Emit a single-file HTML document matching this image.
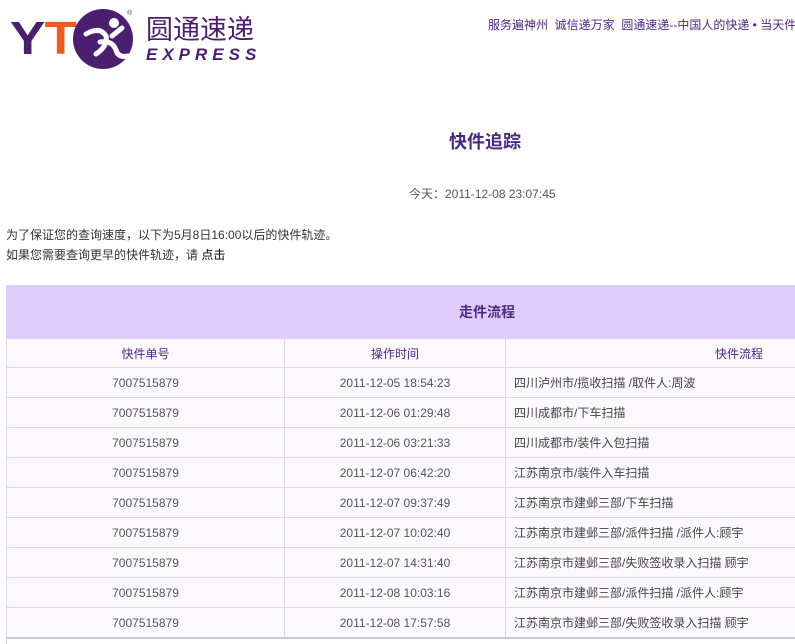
<!DOCTYPE html>
<html><head><meta charset="utf-8"><style>
body{margin:0;width:795px;height:644px;overflow:hidden;background:#fff;font-family:"Liberation Sans","Noto Sans CJK SC",sans-serif;font-size:12px;color:#333;position:relative}
.abs{position:absolute;white-space:nowrap}
table{position:absolute;left:6px;top:285px;border-collapse:collapse;width:800px;table-layout:fixed}
td{border:1px solid #e3d3f3;height:29px;text-align:center;color:#555;font-size:12px;background:#fbf8fe;padding:0}
td.l{text-align:left;padding-left:8px;color:#444}
tr.h td{background:#e0ccfb;height:52px;font-weight:bold;color:#4a2a80;font-size:14px;border-color:#e0ccfb}
tr.c td{color:#4a2a80;height:28px}
</style></head><body>
<svg class="abs" style="left:10px;top:6px" width="250" height="66" viewBox="0 0 250 66">
<text x="0" y="48" font-family="Liberation Sans" font-weight="bold" font-size="46" fill="#4b1f6f" transform="scale(1.15,1)" letter-spacing="-5">Y</text>
<text x="30" y="48" font-family="Liberation Sans" font-weight="bold" font-size="46" fill="#f05a22" transform="scale(1.15,1)">T</text>
<circle cx="93" cy="33" r="30" fill="#4b1f6f"/>
<circle cx="104" cy="17" r="5" fill="#fff"/>
<path d="M76 28 Q90 20 96 30 Q98 40 86 48 M90 36 Q102 34 106 44 Q108 52 118 50 M102 30 L112 22" stroke="#fff" stroke-width="5" fill="none" stroke-linecap="round"/>
<text x="117" y="9" font-size="7" fill="#4b1f6f">®</text>
<text x="136" y="33" font-family="Noto Sans CJK SC" font-size="27" fill="#4b1f6f" letter-spacing="0">圆通速递</text>
<text x="136" y="54" font-family="Liberation Sans" font-weight="bold" font-style="italic" font-size="17" fill="#4b1f6f" letter-spacing="5">EXPRESS</text>
</svg>
<div class="abs" style="left:488px;top:16px;color:#4a2a80;font-size:12px">服务遍神州&nbsp; 诚信递万家&nbsp; 圆通速递--中国人的快递 • 当天件</div>
<div class="abs" style="left:449px;top:128px;color:#4a2a80;font-size:18px;font-weight:bold">快件追踪</div>
<div class="abs" style="left:409px;top:185px;color:#555">今天：2011-12-08 23:07:45</div>
<div class="abs" style="left:6px;top:226px;color:#333">为了保证您的查询速度，以下为5月8日16:00以后的快件轨迹。</div>
<div class="abs" style="left:6px;top:246px;color:#333">如果您需要查询更早的快件轨迹，请 <span style="color:#000">点击</span></div>
<table>
<colgroup><col style="width:278px"><col style="width:221px"><col></colgroup>
<tr class="h"><td colspan="3" style="padding-right:290px;text-align:right">走件流程</td></tr>
<tr class="c"><td>快件单号</td><td>操作时间</td><td style="text-align:right;padding-right:42px">快件流程</td></tr>
<tr><td>7007515879</td><td>2011-12-05 18:54:23</td><td class="l">四川泸州市/揽收扫描 /取件人:周波</td></tr>
<tr><td>7007515879</td><td>2011-12-06 01:29:48</td><td class="l">四川成都市/下车扫描</td></tr>
<tr><td>7007515879</td><td>2011-12-06 03:21:33</td><td class="l">四川成都市/装件入包扫描</td></tr>
<tr><td>7007515879</td><td>2011-12-07 06:42:20</td><td class="l">江苏南京市/装件入车扫描</td></tr>
<tr><td>7007515879</td><td>2011-12-07 09:37:49</td><td class="l">江苏南京市建邺三部/下车扫描</td></tr>
<tr><td>7007515879</td><td>2011-12-07 10:02:40</td><td class="l">江苏南京市建邺三部/派件扫描 /派件人:顾宇</td></tr>
<tr><td>7007515879</td><td>2011-12-07 14:31:40</td><td class="l">江苏南京市建邺三部/失败签收录入扫描 顾宇</td></tr>
<tr><td>7007515879</td><td>2011-12-08 10:03:16</td><td class="l">江苏南京市建邺三部/派件扫描 /派件人:顾宇</td></tr>
<tr><td style="border-bottom:2px solid #ccc">7007515879</td><td style="border-bottom:2px solid #ccc">2011-12-08 17:57:58</td><td class="l" style="border-bottom:2px solid #ccc">江苏南京市建邺三部/失败签收录入扫描 顾宇</td></tr>
</table>
<div class="abs" style="left:6px;top:638px;width:1px;height:6px;background:#ccc"></div>
</body></html>
